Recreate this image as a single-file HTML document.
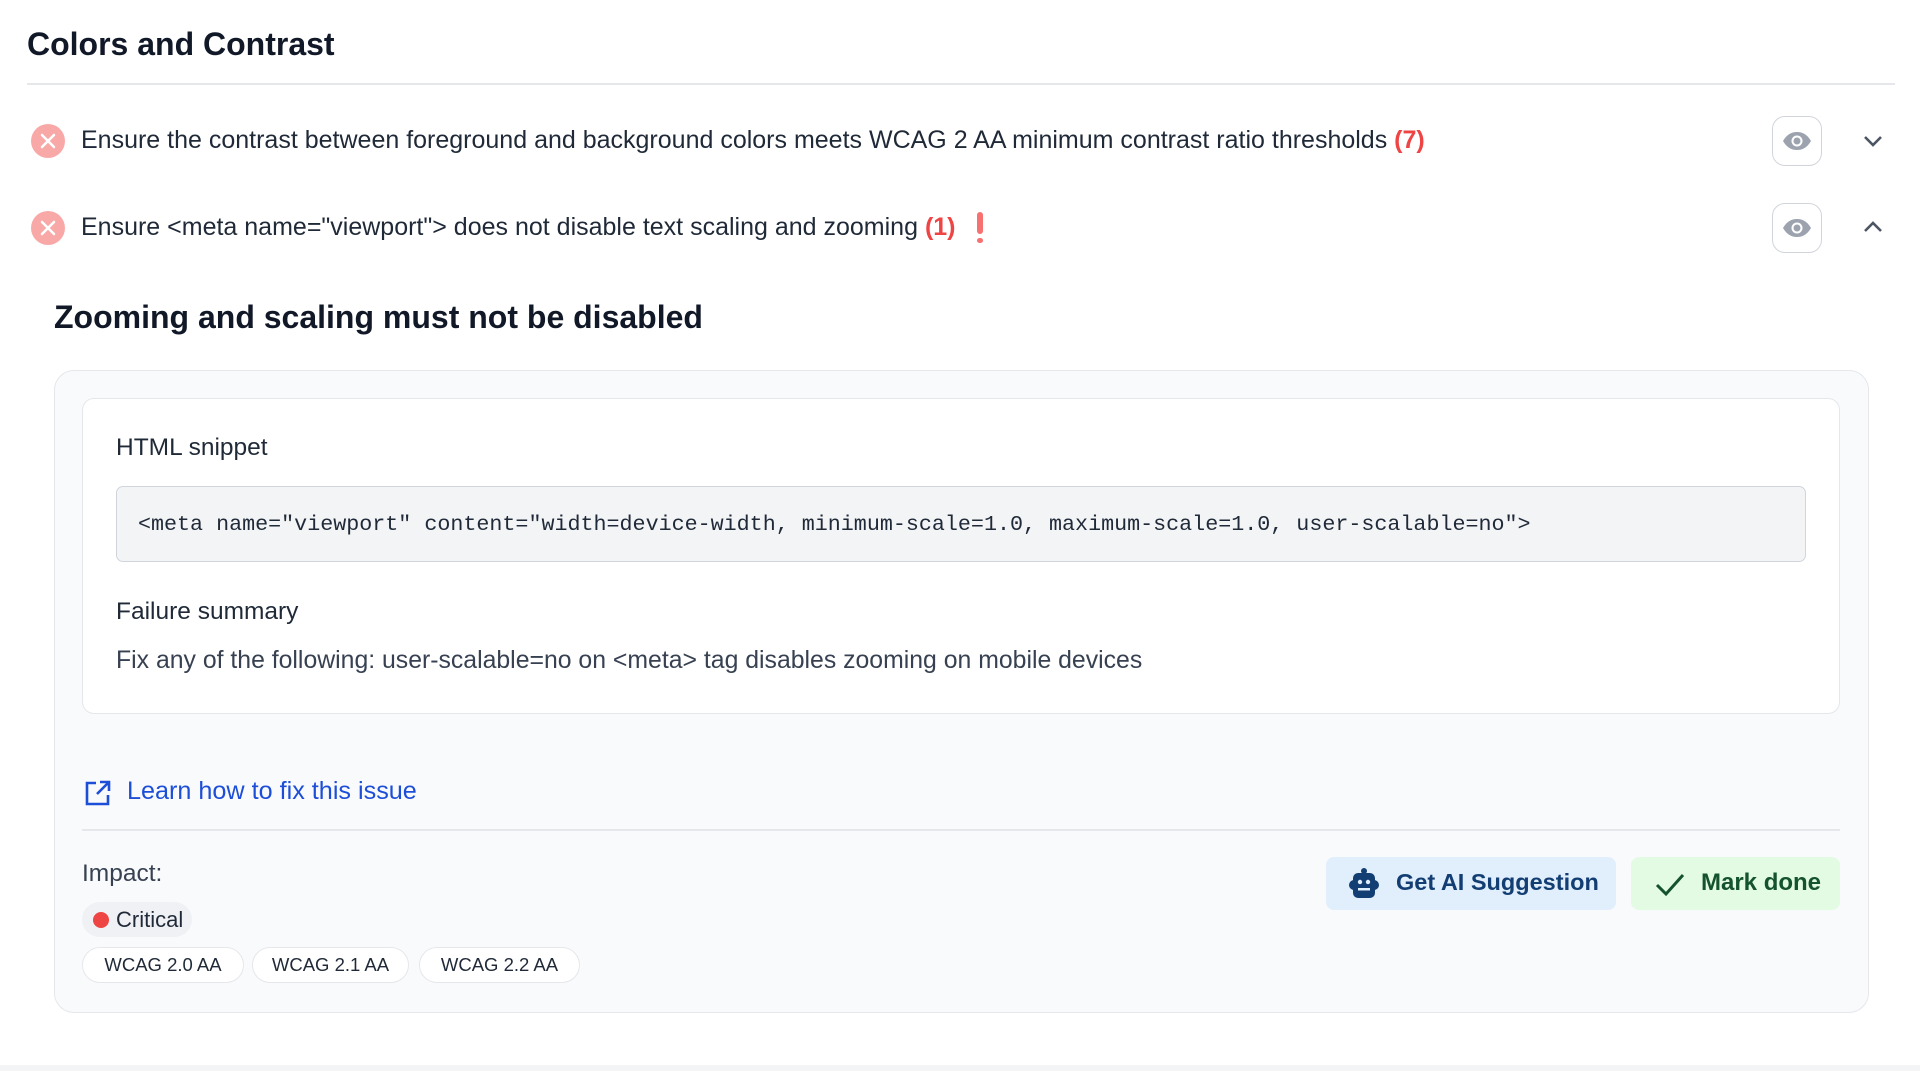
<!DOCTYPE html>
<html><head><meta charset="utf-8"><style>
*{margin:0;padding:0;box-sizing:border-box}
body{width:1920px;height:1071px;background:#f3f4f6;font-family:"Liberation Sans",sans-serif;color:#1f2937;position:relative;overflow:hidden}
.page{position:absolute;left:0;top:0;width:1920px;height:1065px;background:#fff}
.a{position:absolute;white-space:nowrap}
.ic{position:absolute;width:34px;height:34px;border-radius:50%;background:#f9a8a8}
.eye{position:absolute;width:50px;height:50px;border:1.5px solid #d1d5db;border-radius:13px;background:#fff;display:flex;align-items:center;justify-content:center}
.pill{position:absolute;height:36px;border:1.5px solid #e5e7eb;border-radius:18px;background:#fff;font-size:18.5px;display:flex;align-items:center;justify-content:center;color:#1f2937}
</style></head><body>
<div class="page">
<div class="a" style="left:27px;top:26px;font-size:32px;font-weight:bold;color:#111827">Colors and Contrast</div>
<div class="a" style="left:27px;top:83px;width:1868px;height:2px;background:#e5e7eb"></div>

<div class="ic" style="left:31px;top:124px"><svg width="34" height="34"><path d="M11 11L23 23M23 11L11 23" stroke="#fff" stroke-width="2.5" stroke-linecap="round"/></svg></div>
<div class="a" style="left:81px;top:126px;font-size:25px">Ensure the contrast between foreground and background colors meets WCAG 2 AA minimum contrast ratio thresholds <span style="color:#ef4444;font-weight:bold">(7)</span></div>
<div class="eye" style="left:1772px;top:116px"><svg width="30" height="20" viewBox="0 0 30 20"><path d="M1 10C5 3 10 1 15 1S25 3 29 10C25 17 20 19 15 19S5 17 1 10Z" fill="#9ca3af"/><circle cx="15" cy="10" r="5.5" fill="#fff"/><circle cx="15" cy="10" r="3.5" fill="#9ca3af"/></svg></div>
<svg class="a" style="left:1862px;top:133px" width="22" height="16"><path d="M3 4L11 12L19 4" stroke="#4b5563" stroke-width="2.6" fill="none"/></svg>

<div class="ic" style="left:31px;top:211px"><svg width="34" height="34"><path d="M11 11L23 23M23 11L11 23" stroke="#fff" stroke-width="2.5" stroke-linecap="round"/></svg></div>
<div class="a" style="left:81px;top:213px;font-size:25px">Ensure &lt;meta name="viewport"&gt; does not disable text scaling and zooming <span style="color:#ef4444;font-weight:bold">(1)</span></div>
<div class="a" style="left:977px;top:212px;width:6px;height:22px;border-radius:3px;background:#f87171"></div>
<div class="a" style="left:977px;top:238px;width:6px;height:5px;border-radius:3px;background:#f87171"></div>
<div class="eye" style="left:1772px;top:203px"><svg width="30" height="20" viewBox="0 0 30 20"><path d="M1 10C5 3 10 1 15 1S25 3 29 10C25 17 20 19 15 19S5 17 1 10Z" fill="#9ca3af"/><circle cx="15" cy="10" r="5.5" fill="#fff"/><circle cx="15" cy="10" r="3.5" fill="#9ca3af"/></svg></div>
<svg class="a" style="left:1862px;top:219px" width="22" height="16"><path d="M3 12L11 4L19 12" stroke="#4b5563" stroke-width="2.6" fill="none"/></svg>

<div class="a" style="left:54px;top:299px;font-size:32px;font-weight:bold;color:#111827">Zooming and scaling must not be disabled</div>

<div class="a" style="left:54px;top:370px;width:1815px;height:643px;background:#f9fafc;border:1.5px solid #e5e7eb;border-radius:20px"></div>
<div class="a" style="left:82px;top:398px;width:1758px;height:316px;background:#fff;border:1.5px solid #e5e7eb;border-radius:12px"></div>
<div class="a" style="left:116px;top:434px;font-size:24.5px">HTML snippet</div>
<div class="a" style="left:116px;top:486px;width:1690px;height:76px;background:#f3f4f6;border:1.5px solid #d1d5db;border-radius:7px"></div>
<div class="a" style="left:138px;top:512px;font-family:'Liberation Mono',monospace;font-size:21.7px">&lt;meta name="viewport" content="width=device-width, minimum-scale=1.0, maximum-scale=1.0, user-scalable=no"&gt;</div>
<div class="a" style="left:116px;top:598px;font-size:24.5px">Failure summary</div>
<div class="a" style="left:116px;top:647px;font-size:24.8px;color:#374151">Fix any of the following: user-scalable=no on &lt;meta&gt; tag disables zooming on mobile devices</div>

<svg class="a" style="left:84px;top:779px" width="28" height="28" viewBox="0 0 28 28"><path d="M12 4H3V25H24V16" stroke="#1d4ed8" stroke-width="2.6" fill="none"/><path d="M16 3H25V12M25 3L13 15" stroke="#1d4ed8" stroke-width="2.6" fill="none"/></svg>
<div class="a" style="left:127px;top:777px;font-size:25.2px;color:#1d4ed8">Learn how to fix this issue</div>
<div class="a" style="left:82px;top:829px;width:1758px;height:1.5px;background:#e5e7eb"></div>

<div class="a" style="left:82px;top:860px;font-size:24.5px;color:#374151">Impact:</div>
<div class="a" style="left:82px;top:902px;width:110px;height:35px;border-radius:18px;background:#eff1f4"></div>
<div class="a" style="left:93px;top:912px;width:16px;height:16px;border-radius:50%;background:#ef4444"></div>
<div class="a" style="left:116px;top:907px;font-size:22px">Critical</div>
<div class="pill" style="left:82px;top:947px;width:162px">WCAG 2.0 AA</div>
<div class="pill" style="left:252px;top:947px;width:157px">WCAG 2.1 AA</div>
<div class="pill" style="left:419px;top:947px;width:161px">WCAG 2.2 AA</div>

<div class="a" style="left:1326px;top:857px;width:290px;height:53px;border-radius:8px;background:#e1eefb"></div>
<svg class="a" style="left:1347px;top:867px" width="34" height="34" viewBox="0 0 34 34"><circle cx="17" cy="4" r="3" fill="#123e73"/><rect x="6" y="6" width="22" height="25" rx="5" fill="#123e73"/><rect x="2" y="13" width="30" height="10" rx="5" fill="#123e73"/><circle cx="13" cy="15" r="2.2" fill="#e1eefb"/><circle cx="21" cy="15" r="2.2" fill="#e1eefb"/><rect x="11" y="21" width="12" height="2.5" fill="#e1eefb"/></svg>
<div class="a" style="left:1396px;top:869px;font-size:23.5px;font-weight:bold;color:#123e73">Get AI Suggestion</div>
<div class="a" style="left:1631px;top:857px;width:209px;height:53px;border-radius:8px;background:#e3fbe3"></div>
<svg class="a" style="left:1655px;top:871px" width="30" height="26"><path d="M2 14L11 23L28 4" stroke="#14532d" stroke-width="3" fill="none"/></svg>
<div class="a" style="left:1701px;top:869px;font-size:24px;font-weight:bold;color:#14532d">Mark done</div>
</div>
</body></html>
